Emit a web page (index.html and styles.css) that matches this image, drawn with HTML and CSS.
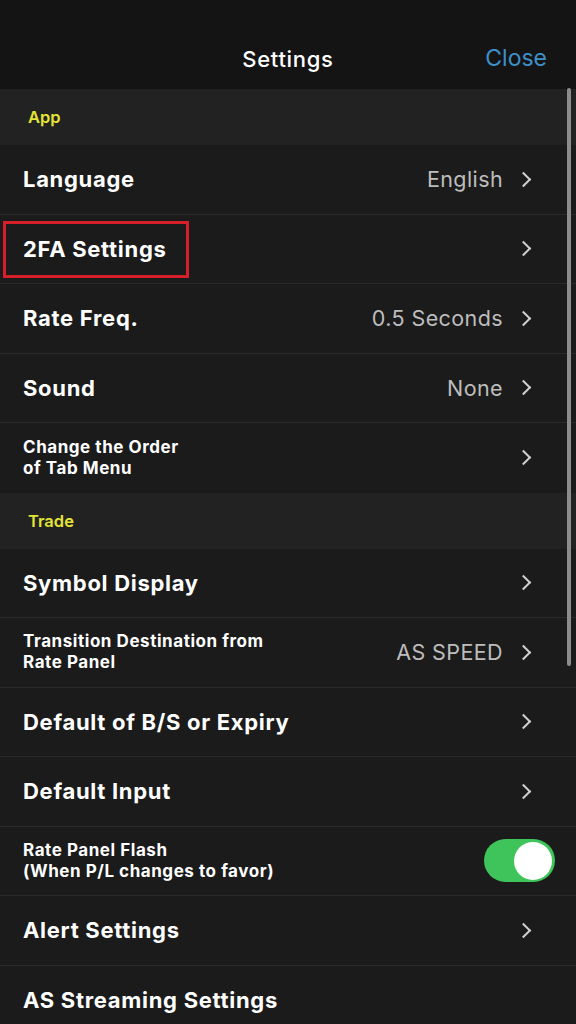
FILE: index.html
```html
<!DOCTYPE html>
<html>
<head>
<meta charset="utf-8">
<link rel="stylesheet" href="styles.css">
</head>
<body>
<div class="screen">
  <header class="nav">
    <div class="nav-title">Settings</div>
    <div class="nav-close">Close</div>
  </header>
  <div class="list">
    <div class="section">App</div>
    <div class="row"><span class="label">Language</span><span class="value">English</span><span class="chev"></span></div>
    <div class="row"><span class="label">2FA Settings</span><span class="chev"></span><span class="highlight"></span></div>
    <div class="row"><span class="label">Rate Freq.</span><span class="value">0.5 Seconds</span><span class="chev"></span></div>
    <div class="row"><span class="label">Sound</span><span class="value">None</span><span class="chev"></span></div>
    <div class="row last"><span class="label small">Change the Order<br>of Tab Menu</span><span class="chev"></span></div>
    <div class="section">Trade</div>
    <div class="row"><span class="label">Symbol Display</span><span class="chev"></span></div>
    <div class="row"><span class="label small">Transition Destination from<br>Rate Panel</span><span class="value">AS SPEED</span><span class="chev"></span></div>
    <div class="row"><span class="label">Default of B/S or Expiry</span><span class="chev"></span></div>
    <div class="row"><span class="label">Default Input</span><span class="chev"></span></div>
    <div class="row toggle-row"><span class="label small">Rate Panel Flash<br>(When P/L changes to favor)</span><span class="toggle"><span class="knob"></span></span></div>
    <div class="row"><span class="label">Alert Settings</span><span class="chev"></span></div>
    <div class="row"><span class="label">AS Streaming Settings</span></div>
  </div>
  <div class="scrollbar"></div>
</div>
</body>
</html>
```

FILE: styles.css
```css
* { box-sizing: border-box; }
html, body {
  margin: 0;
  padding: 0;
  background: #1b1b1b;
  font-family: Inter, "Liberation Sans", sans-serif;
  color: #fff;
}
.screen {
  position: relative;
  width: 576px;
  height: 1024px;
  overflow: hidden;
  background: #1b1b1b;
}
.nav {
  height: 89px;
  background: #141414;
  display: flex;
  align-items: center;
  justify-content: center;
  position: relative;
  padding-top: 28px;
}
.nav-title {
  font-size: 22px;
  font-weight: 500;
  letter-spacing: 0.7px;
  color: #fff;
}
.nav-close {
  position: absolute;
  right: 29px;
  top: 44px;
  font-size: 23px;
  font-weight: 400;
  color: #3f8fc8;
}
.list {
  display: flex;
  flex-direction: column;
}
.section {
  height: 56px;
  background: #222222;
  color: #e4e436;
  font-size: 16.5px;
  font-weight: 600;
  display: flex;
  align-items: center;
  padding-left: 28px;
}
.row {
  position: relative;
  height: 69.5px;
  flex: none;
  display: flex;
  align-items: center;
  padding: 0 44px 0 23px;
  border-bottom: 1px solid #2b2b2b;
  background: #1b1b1b;
}
.row.last { border-bottom: none; }
.label {
  flex: 1;
  font-size: 22px;
  font-weight: 700;
  color: #fff;
  letter-spacing: 0.7px;
}
.label.small {
  font-size: 17px;
  line-height: 21px;
  letter-spacing: 0.55px;
}
.value {
  font-size: 21.5px;
  font-weight: 400;
  color: #bdbdbd;
  letter-spacing: 0.4px;
  margin-right: 15px;
}
.chev {
  width: 11px;
  height: 11px;
  border-top: 2.5px solid #cfcfcf;
  border-right: 2.5px solid #cfcfcf;
  transform: rotate(45deg);
  margin-right: 3px;
}
.highlight {
  position: absolute;
  left: 3px;
  top: 6px;
  width: 186px;
  height: 57px;
  border: 3px solid #d71f2b;
}
.toggle-row { padding-right: 21px; }
.toggle {
  width: 71px;
  height: 43px;
  border-radius: 22px;
  background: #3ec45a;
  position: relative;
}
.knob {
  position: absolute;
  right: 3px;
  top: 2.5px;
  width: 38px;
  height: 38px;
  border-radius: 50%;
  background: #fff;
}
.scrollbar {
  position: absolute;
  left: 567px;
  top: 88px;
  width: 4px;
  height: 578px;
  border-radius: 2px;
  background: #8c8c8c;
}
```
